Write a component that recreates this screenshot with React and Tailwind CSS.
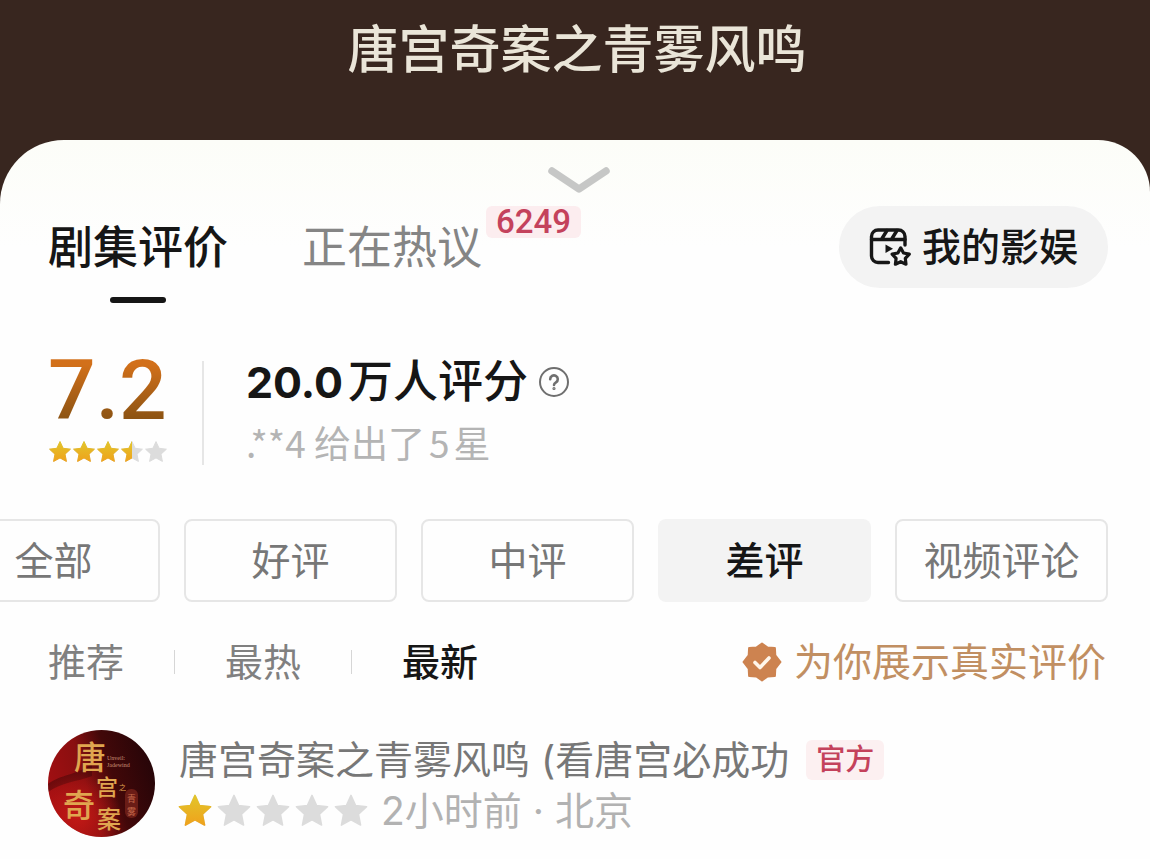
import React from "react";

const STAR =
  "M12 1.6l3.1 6.7 7.3.9-5.4 5 1.4 7.2L12 17.9l-6.4 3.5L7 14.2l-5.4-5 7.3-.9z";

function Star({ id, size, fill }) {
  return (
    <svg className={size} viewBox="0 0 24 24" aria-hidden="true">
      <defs>
        <linearGradient id={id} x1="0" y1="0" x2="0" y2="1">
          <stop offset="0" stopColor="#e2c52a" />
          <stop offset="1" stopColor="#efa21c" />
        </linearGradient>
        <clipPath id={id + "-clip"}>
          <rect x="0" y="0" width={24 * fill} height="24" />
        </clipPath>
      </defs>
      <path d={STAR} fill="#dcdcdc" stroke="#dcdcdc" strokeLinejoin="round" />
      {fill > 0 && (
        <path
          d={STAR}
          fill={`url(#${id})`}
          stroke={`url(#${id})`}
          strokeLinejoin="round"
          clipPath={`url(#${id}-clip)`}
        />
      )}
    </svg>
  );
}

function Stars({ name, value, size, className }) {
  return (
    <div className={className} role="img" aria-label={`${value} / 5`}>
      {[0, 1, 2, 3, 4].map((i) => (
        <Star
          key={i}
          id={`${name}-${i}`}
          size={size}
          fill={Math.max(0, Math.min(1, value - i))}
        />
      ))}
    </div>
  );
}

function MovieIcon() {
  return (
    <svg
      className="h-[39px] w-[43px]"
      viewBox="0 0 43 39"
      fill="none"
      stroke="#161616"
      strokeWidth="3.4"
      strokeLinecap="round"
      strokeLinejoin="round"
      aria-hidden="true"
    >
      <path d="M19.500 34.500H9a6.500 6.500 0 0 1-6.500-6.500V8.500A6.500 6.500 0 0 1 9 2h20.500A6.500 6.500 0 0 1 36 8.500V17" />
      <path d="M2.500 11.500H36M13 10.500l5-8M23 10.500l5-8" />
      <path d="M16.500 16.500v8.500l7.500-4.200z" fill="#161616" stroke="none" />
      <path
        d="M31.700 19.800l2.800 5.200 5.800 1.100-4 4.300.7 5.800-5.300-2.500-5.300 2.500.7-5.800-4-4.300 5.800-1.100z"
        strokeWidth="3.200"
      />
    </svg>
  );
}

function VerifiedIcon() {
  return (
    <svg className="size-10" viewBox="0 0 40 40" aria-hidden="true">
      <path
        d="M20 1.500l5.600 4.100 7.300.5.400 7.200L38.500 20l-5.200 6.700-.4 7.200-7.300.5L20 38.500l-5.600-4.100-7.300-.5-.4-7.200L1.500 20l5.200-6.700.4-7.200 7.300-.5z"
        fill="#cd8350"
        stroke="#cd8350"
        strokeWidth="2"
        strokeLinejoin="round"
      />
      <path
        d="M13 20.500l5 5 9-9.500"
        fill="none"
        stroke="#fff6ea"
        strokeWidth="3.600"
        strokeLinecap="round"
        strokeLinejoin="round"
      />
    </svg>
  );
}

function Avatar() {
  return (
    <svg
      className="size-[107px] shrink-0 rounded-full"
      viewBox="0 0 107 107"
      role="img"
      aria-label="唐宫奇案"
    >
      <defs>
        <linearGradient id="avatar-bg" x1="0" y1="0.600" x2="1" y2="0.300">
          <stop offset="0" stopColor="#a30f12" />
          <stop offset="0.350" stopColor="#8a0f10" />
          <stop offset="0.600" stopColor="#420809" />
          <stop offset="1" stopColor="#250508" />
        </linearGradient>
        <radialGradient id="avatar-glow" cx="0.280" cy="0.800" r="0.400">
          <stop offset="0" stopColor="#c81a16" stopOpacity="0.900" />
          <stop offset="1" stopColor="#c81a16" stopOpacity="0" />
        </radialGradient>
      </defs>
      <rect width="107" height="107" fill="url(#avatar-bg)" />
      <path d="M0 54C14 44 26 46 44 34v12C28 52 14 52 0 62z" fill="#3c0508" opacity="0.500" />
      <rect width="107" height="107" fill="url(#avatar-glow)" />
      <g fill="#e0a650" fontFamily='"Noto Sans CJK SC", sans-serif' fontWeight="500">
        <text x="26" y="39" fontSize="32">唐</text>
        <text x="48" y="65" fontSize="22">宫</text>
        <text x="15" y="87" fontSize="32">奇</text>
        <text x="49" y="98" fontSize="24">案</text>
        <text x="71" y="60" fontSize="7" fontWeight="400">之</text>
      </g>
      <g fill="#c99076" fontFamily='"Liberation Serif", serif' fontSize="6">
        <text x="59" y="30">Unveil:</text>
        <text x="59" y="37">Jadewind</text>
      </g>
      <rect x="77" y="59" width="13" height="29" rx="6" fill="#6a1c16" />
      <g fill="#c4684a" fontFamily='"Noto Sans CJK SC", sans-serif' fontSize="9">
        <text x="79" y="72">青</text>
        <text x="79" y="85">雾</text>
      </g>
    </svg>
  );
}

const FILTERS = ["全部", "好评", "中评", "差评", "视频评论"];
const SORTS = ["推荐", "最热", "最新"];

export default function App() {
  return (
    <div className="flex min-h-screen flex-col overflow-hidden bg-[#38261f] font-['Inter','Noto_Sans_CJK_SC',sans-serif] text-[#161616]">
      <header className="flex h-[140px] justify-center pt-5 pl-1">
        <h1 className="text-[51px] leading-[60px] font-medium text-[#eae5d8]">
          唐宫奇案之青雾风鸣
        </h1>
      </header>

      <main className="flex-1 rounded-tl-[64px] rounded-tr-[52px] bg-linear-to-b from-[#fcfdf8] to-[#fefefe] to-15%">
        <div className="flex h-[66px] justify-center pt-6 pl-2">
          <button type="button" aria-label="收起" className="h-8 w-16">
            <svg viewBox="0 0 64 32" className="h-8 w-16" aria-hidden="true">
              <path
                d="M5 7l27 18L59 7"
                fill="none"
                stroke="#c6c7c6"
                strokeWidth="7.500"
                strokeLinecap="round"
                strokeLinejoin="round"
              />
            </svg>
          </button>
        </div>

        <div className="flex items-start justify-between pr-[42px] pl-12">
          <nav className="flex gap-[74px] text-[45px] leading-[60px]">
            <button type="button" className="flex flex-col items-center pt-3 font-medium">
              剧集评价
              <span className="mt-[19px] h-[6px] w-14 rounded-full bg-[#161616]" />
            </button>
            <button type="button" className="flex items-start text-[#858585]">
              <span className="pt-3">正在热议</span>
              <span className="ml-1 rounded-md bg-[#fcedef] px-[10px] font-['Roboto',sans-serif] text-[33px] leading-8 font-medium text-[#c4425c]">
                6249
              </span>
            </button>
          </nav>
          <button
            type="button"
            className="flex h-[82px] items-center gap-[10px] rounded-full bg-[#f3f3f3] px-[30px] text-[39px] leading-[48px] font-medium"
          >
            <MovieIcon />
            我的影娱
          </button>
        </div>

        <section className="mt-[50px] flex h-[112px] pl-12">
          <div className="flex w-[154px] flex-col">
            <div className="bg-linear-to-b from-[#d2701a] from-15% to-[#8e5413] to-85% bg-clip-text font-['Roboto',sans-serif] text-[84px] leading-[76px] font-medium text-transparent">
              7.2
            </div>
            <Stars name="score" value={3.5} size="size-6" className="mt-[11px] flex" />
          </div>
          <div className="mt-2 h-[104px] w-[2px] bg-[#e6e6e6]" />
          <div className="ml-[42px] flex flex-col">
            <div className="flex h-[58px] items-center text-[45px] leading-[58px] font-medium">
              <span className="mr-[5px] text-[43px] font-bold">20.0</span>
              万人评分
              <button type="button" aria-label="评分说明" className="ml-[10px]">
                <svg
                  viewBox="0 0 32 32"
                  className="size-8"
                  fill="none"
                  stroke="#6f6f6f"
                  strokeLinecap="round"
                  strokeLinejoin="round"
                  aria-hidden="true"
                >
                  <circle cx="16" cy="16" r="14" strokeWidth="2" />
                  <path
                    d="M12.200 13.200a3.800 3.800 0 1 1 5.800 3.200c-1.300.8-2 1.300-2 2.600"
                    strokeWidth="2.600"
                  />
                  <circle cx="16" cy="22.500" r="0.600" strokeWidth="2" />
                </svg>
              </button>
            </div>
            <div className="mt-[9px] font-['Noto_Sans_CJK_SC',sans-serif] text-[37px] leading-[44px] text-[#b4b4b4]">
              .**4 给出了<span className="mx-1">5</span>星
            </div>
          </div>
        </section>

        <div className="mt-[54px] -ml-[53px] grid grid-cols-5 gap-6 pr-[42px] text-[39px] leading-[48px]">
          {FILTERS.map((label) => (
            <button
              key={label}
              type="button"
              className={
                label === "差评"
                  ? "h-[83px] rounded-lg bg-[#f3f3f3] font-medium whitespace-nowrap"
                  : "h-[83px] rounded-lg border-2 border-[#e6e6e6] whitespace-nowrap text-[#777777]"
              }
            >
              {label}
            </button>
          ))}
        </div>

        <div className="mt-[35px] flex items-center justify-between pr-[44px] pl-12 text-[38px] leading-[50px]">
          <div className="flex items-center gap-[50px]">
            {SORTS.map((label, i) => (
              <React.Fragment key={label}>
                {i > 0 && <span className="h-6 w-px bg-[#d6d6d6]" />}
                <button
                  type="button"
                  className={label === "最新" ? "font-medium" : "text-[#808080]"}
                >
                  {label}
                </button>
              </React.Fragment>
            ))}
          </div>
          <div className="flex items-center gap-3 text-[39px] text-[#c18f62]">
            <VerifiedIcon />
            为你展示真实评价
          </div>
        </div>

        <article className="mt-[43px] flex gap-6 pl-12">
          <Avatar />
          <div className="flex flex-col pt-1">
            <div className="flex items-center text-[39px] leading-[52px] text-[#777777]">
              唐宫奇案之青雾风鸣 (看唐宫必成功
              <span className="ml-[17px] rounded-md bg-[#fcf0f1] px-[10px] text-[29px] leading-10 font-medium text-[#c4425c]">
                官方
              </span>
            </div>
            <div className="flex items-center text-[39px] leading-[50px] text-[#b2b2b2]">
              <Stars name="review" value={1} size="size-9" className="mr-3 -ml-[2px] flex gap-[3px]" />
              2小时前 · 北京
            </div>
          </div>
        </article>
      </main>
    </div>
  );
}
